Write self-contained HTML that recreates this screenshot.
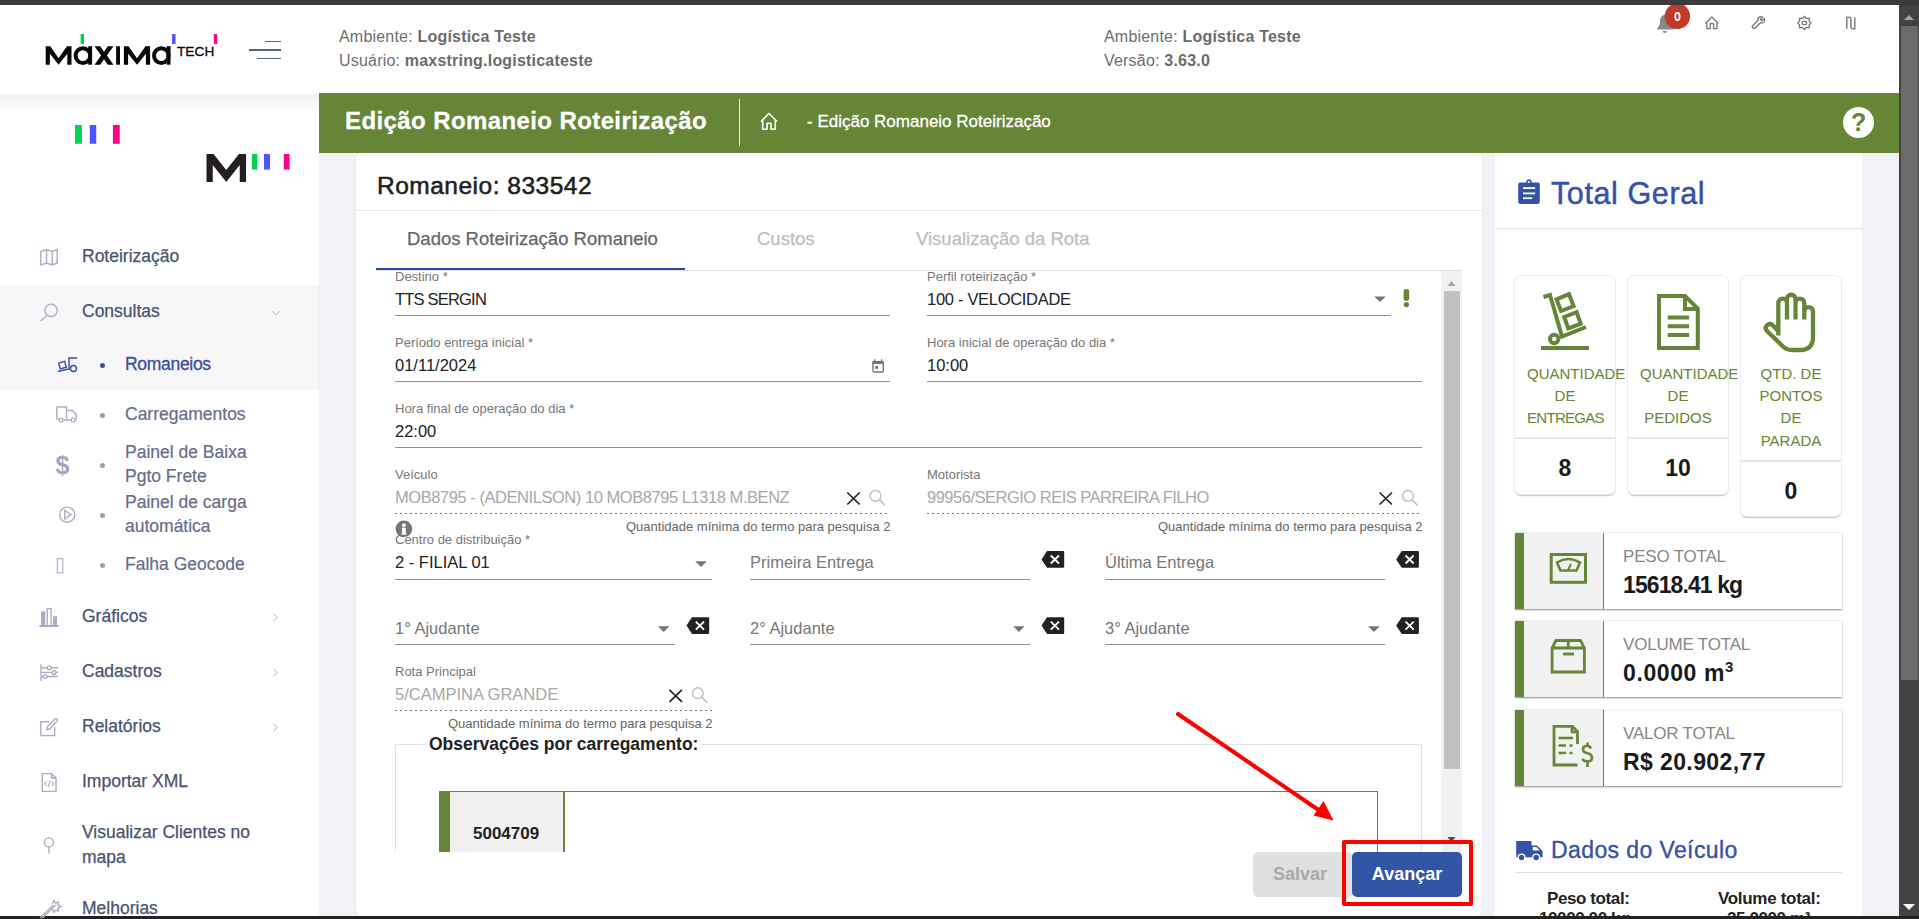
<!DOCTYPE html>
<html><head><meta charset="utf-8">
<style>
*{box-sizing:border-box;margin:0;padding:0}
html,body{width:1919px;height:919px;overflow:hidden;background:#f1f2f7;font-family:"Liberation Sans",sans-serif;position:relative}
.a{position:absolute;white-space:nowrap}
#topbar{left:0;top:0;width:1919px;height:5px;background:#3b3b3b}
#botbar{left:0;top:916px;width:1919px;height:3px;background:#222}
#header{left:0;top:5px;width:1899px;height:88px;background:#fff}
#side{left:0;top:93px;width:319px;height:823px;background:#fff}
#green{left:319px;top:93px;width:1580px;height:60px;background:#668536}
#vscroll{left:1899px;top:5px;width:20px;height:911px;background:#424242}
.htxt{font-size:16px;color:#6e6e6e;line-height:24px;letter-spacing:0.2px}
.htxt b{font-weight:bold;color:#6b6b6b}
#card{left:356px;top:153px;width:1126px;height:763px;background:#fff;border-radius:5px 5px 6px 6px;box-shadow:0 0 2px rgba(0,0,0,0.08)}
#rpanel{left:1495px;top:153px;width:367px;height:763px;background:#fff}
.mi{font-size:17.5px;color:#4b5272;line-height:24px;-webkit-text-stroke:0.25px #4b5272}
.sub{color:#676d8c;-webkit-text-stroke:0.2px #676d8c}
.dot{width:5px;height:5px;border-radius:50%;background:#9a9eb2}
.tab{font-size:18.5px;line-height:22px;-webkit-text-stroke:0.25px currentColor}
.lbl{font-size:13px;color:#777;line-height:16px;margin-top:-1px}
.val{font-size:16.5px;color:#222;line-height:22px;margin-top:-2px}
.dis{color:#a8a8a8}
.ph{color:#777}
.ul{height:1px;background:#8f8f8f}
.dul{height:1.3px;background-image:linear-gradient(90deg,#777 45%,transparent 45%);background-size:5px 1.3px}
.hint{font-size:13px;color:#666;text-align:right;line-height:16px}
.btn{height:45px;border-radius:5px;font-size:18px;font-weight:bold;line-height:45px}
.qc{width:100px;background:#fff;border-radius:6px;box-shadow:0 0 0 1px #ececec,0 1.5px 1.5px rgba(0,0,0,0.25)}
.qd{position:absolute;left:0;width:100px;height:1.5px;background:#e6e6e6}
.ql{width:100px;padding:0 12px;text-align:center;font-size:15px;line-height:22.2px;color:#668536;white-space:nowrap}
.qv{width:100px;text-align:center;font-size:23px;font-weight:bold;color:#1a1a1a;line-height:28px}
.ic{width:327px;height:76px;background:#fff;box-shadow:0 1.5px 1.5px rgba(0,0,0,0.3),0 0 0 1px #efefef;border-left:9.5px solid #668536}
.ic::before{content:"";position:absolute;left:0;top:0;width:78.5px;height:76px;background:#f1f1f1;border-right:1px solid #668536}
.il{font-size:17px;color:#878787;line-height:24px;letter-spacing:-0.2px}
.iv{font-size:23px;font-weight:bold;color:#1a1a1a;line-height:30px;letter-spacing:-0.9px}
</style></head><body>
<div class="a" id="header"></div>
<div class="a" id="side"></div>
<div class="a" id="green"></div>
<div class="a" id="card"></div>
<div class="a" id="rpanel"></div>
<div class="a" id="vscroll"></div>
<div class="a" id="botbar"></div>


<!-- logo -->
<svg class="a" style="left:0;top:0" width="300" height="200" viewBox="0 0 300 200">
<g fill="#0a0609">
<polygon points="45.7,64.7 45.7,46.2 50.3,46.2 58.6,58.3 66.9,46.2 71.5,46.2 71.5,64.7 67.3,64.7 67.3,53.7 58.6,64.7 49.9,53.7 49.9,64.7"/>
<polygon points="123.9,64.7 123.9,46.2 128.5,46.2 137,58.3 145.5,46.2 150.1,46.2 150.1,64.7 145.9,64.7 145.9,53.7 137,64.7 128.1,53.7 128.1,64.7"/>
<polygon points="94.5,46.2 100.2,46.2 104,51.8 107.8,46.2 113.5,46.2 106.9,55.5 113.5,64.7 107.8,64.7 104,59.2 100.2,64.7 94.5,64.7 101.1,55.5"/>
<rect x="116.1" y="46.2" width="3.9" height="18.5"/>
<rect x="88.2" y="46.2" width="3.9" height="18.5"/>
<rect x="166.6" y="46.2" width="3.9" height="18.5"/>
</g>
<g fill="none" stroke="#0a0609" stroke-width="4">
<ellipse cx="82.9" cy="55.6" rx="7.3" ry="7.4"/>
<ellipse cx="161.3" cy="55.6" rx="7.3" ry="7.4"/>
</g>
<rect x="80.6" y="34" width="3.4" height="10" fill="#00d455"/>
<rect x="172.1" y="34" width="3.4" height="10" fill="#4d55ff"/>
<rect x="213.8" y="34" width="3.4" height="10" fill="#ff0090"/>
<text x="177" y="56.3" font-family="Liberation Sans" font-size="13.7" fill="#0a0609" stroke="#0a0609" stroke-width="0.3">TECH</text>
<rect x="75" y="125" width="6.9" height="18.75" fill="#00d455"/>
<rect x="89.75" y="125" width="6.5" height="18.75" fill="#4d55ff"/>
<rect x="112.9" y="125" width="6.85" height="18.75" fill="#ff0090"/>
<polygon fill="#231f20" points="206.5,181.9 206.5,154 213.5,154 226.25,170 239,154 246,154 246,181.9 239.75,181.9 239.75,165 226.25,181.9 212.75,165 212.75,181.9"/>
<rect x="251.9" y="154" width="5.35" height="15.6" fill="#00d455"/>
<rect x="264" y="154" width="6" height="15.6" fill="#4d55ff"/>
<rect x="283.75" y="154" width="5.85" height="15.6" fill="#ff0090"/>
</svg>
<!-- hamburger -->
<div class="a" style="left:265px;top:40.5px;width:16px;height:1.2px;background:#4f6888"></div>
<div class="a" style="left:249px;top:49.2px;width:32px;height:1.8px;background:#4f6888"></div>
<div class="a" style="left:257px;top:57.7px;width:24px;height:1.2px;background:#4f6888"></div>

<!-- sidebar -->
<div class="a" style="left:0;top:94px;width:319px;height:22px;background:linear-gradient(#f1f1f1,#fff)"></div>
<div class="a" style="left:0;top:285px;width:319px;height:105px;background:#f7f7fa"></div>


<!-- menu -->
<div class="a mi" style="left:82px;top:244px">Roteirização</div>
<div class="a mi" style="left:82px;top:299px">Consultas</div>
<div class="a mi" style="left:125px;top:352px;color:#3a4e9e;-webkit-text-stroke:0.3px #3a4e9e;letter-spacing:-0.3px">Romaneios</div>
<div class="a mi sub" style="left:125px;top:402px">Carregamentos</div>
<div class="a mi sub" style="left:125px;top:440px;line-height:24px;white-space:normal;width:150px">Painel de Baixa Pgto Frete</div>
<div class="a mi sub" style="left:125px;top:490px;line-height:24px;white-space:normal;width:150px">Painel de carga automática</div>
<div class="a mi sub" style="left:125px;top:552px">Falha Geocode</div>
<div class="a mi" style="left:82px;top:604px">Gráficos</div>
<div class="a mi" style="left:82px;top:659px">Cadastros</div>
<div class="a mi" style="left:82px;top:714px">Relatórios</div>
<div class="a mi" style="left:82px;top:769px">Importar XML</div>
<div class="a mi" style="left:82px;top:820px;line-height:25px">Visualizar Clientes no<br>mapa</div>
<div class="a mi" style="left:82px;top:896px">Melhorias</div>
<div class="a dot" style="left:100px;top:363px;background:#3a4e9e"></div>
<div class="a dot" style="left:100px;top:413px"></div>
<div class="a dot" style="left:100px;top:463px"></div>
<div class="a dot" style="left:100px;top:513px"></div>
<div class="a dot" style="left:100px;top:563px"></div>


<!-- sidebar icons -->
<svg class="a" style="left:0;top:0" width="320" height="919" viewBox="0 0 320 919">
<g fill="none" stroke="#a9aec4" stroke-width="1.4">
<path d="M40.8,251.5 L46.5,249.5 L52.2,251.5 L57.2,249.5 L57.2,263 L52.2,265 L46.5,263 L40.8,265 Z M46.5,249.5 V263 M52.2,251.5 V265"/>
<circle cx="51.1" cy="310.3" r="6.2"/>
<path d="M46.8,315.5 L40.5,321"/>
<path d="M56.8,419 V407 H66.5 V419 M66.5,410.5 H72.5 L76.3,414.5 V419.5 M63.5,420 H70.5 M56.8,419.5 H58.5 M75.5,420 H76.3"/>
<circle cx="61" cy="420" r="1.9"/><circle cx="73" cy="420" r="1.9"/>
<circle cx="67.2" cy="514.7" r="7.6"/>
<path d="M64.8,510.3 L71,514.7 L64.8,519 Z"/>
<rect x="57.4" y="558.6" width="5.4" height="14.2" stroke-width="1.1"/>
<path d="M47.2,625 V608.6 H51.1 V625"/>
<path d="M41,664.2 V681 M41,667.8 H58 M41,672.4 H58 M41,676.5 H58" />
<circle cx="49.2" cy="667.8" r="1.9" fill="#fff"/><circle cx="54" cy="672.4" r="1.9" fill="#fff"/><circle cx="45.2" cy="676.5" r="1.9" fill="#fff"/>
<path d="M49,721.8 H40.8 V735.6 H54.6 V727"/>
<path d="M46.7,729.6 L47.5,726.5 L55,719 Q56.5,718.3 57.2,719.5 Q57.5,720.5 56.7,721.5 L49.5,729 Z"/>
<path d="M42.3,773.6 H51.5 L56,778 V791.4 H42.3 Z M51.5,773.6 V778 H56"/>
<path d="M46.5,781.5 L44.6,783.8 L46.5,786 M52,781.5 L53.8,783.8 L52,786 M50.3,780.5 L48.2,787" stroke-width="1.1"/>
<circle cx="48.9" cy="842.4" r="4.5"/>
<path d="M48.9,847 V853.7"/>
<path d="M40,918 L53,905 M42.5,918 L55.5,905"/>
<path d="M52.5,904 l1.5,-3.5 l1.5,2.5 l3,-1 l-0.5,3 l3,1.5 l-3,1.5 l0.5,3 l-3,-1 l-1.5,2.5 l-1.5,-3.5"/>
<path d="M272.3,311 L276.3,315 L280.3,311" stroke-width="1"/>
<path d="M273.5,614 L277.5,617.5 L273.5,621" stroke-width="1"/>
<path d="M273.5,669 L277.5,672.5 L273.5,676" stroke-width="1"/>
<path d="M273.5,724 L277.5,727.5 L273.5,731" stroke-width="1"/>
</g>
<g fill="#a9aec4">
<rect x="39.4" y="625" width="19.1" height="2"/>
<rect x="41" y="611.3" width="4.2" height="14"/>
<rect x="53" y="616.2" width="4" height="9"/>
<text x="55.5" y="473.5" font-family="Liberation Sans" font-weight="bold" font-size="25" fill="#a3a7bd">$</text>
</g>
<g fill="none" stroke="#3a4e9e" stroke-width="1.4">
<path d="M69,368 V358 H77.2"/>
<circle cx="73.5" cy="368.5" r="3"/>
<path d="M58,371.5 L70.5,368.5"/>
<path d="M58.6,363.2 L64.6,361.3 L66.3,367.2 L60.3,369 Z"/>
</g>
</svg>


<!-- header icons -->
<svg class="a" style="left:1640px;top:0" width="240" height="160" viewBox="1640 0 240 160">
<path fill="#888" d="M1657,29.5 Q1657,27.5 1659,26 Q1660,24 1660,20 Q1660.5,15 1666,14.5 Q1671.5,15 1672,20 Q1672,24 1673,26 Q1675,27.5 1675,29.5 Z"/>
<path fill="#888" d="M1662.5,31 H1667 Q1666.5,33 1664.75,33 Q1663,33 1662.5,31 Z"/>
<circle cx="1677.4" cy="16.3" r="12.7" fill="#c0392b"/>
<g fill="none" stroke="#777" stroke-width="1.3" stroke-linejoin="round">
<path d="M1705.5,23.5 L1711.9,17 L1718.3,23.5 M1706.8,22.5 V28.6 H1710.2 V23.6 H1713.6 V28.6 H1717 V22.5"/>
<path d="M1752.5,27.5 Q1751.8,26.6 1752.6,25.7 L1758.3,20 Q1757.6,17.5 1759.8,16.8 Q1761.5,16.3 1762.6,17 L1760.4,19.3 L1761.7,20.7 L1764.1,18.5 Q1765,20 1764.2,21.8 Q1763,23.5 1760.5,22.7 L1754.8,28.3 Q1753.5,28.7 1752.5,27.5 Z"/>
<path d="M1804.4,16.3 L1806.2,18.7 L1809.3,18.2 L1809.2,21.3 L1811.2,23 L1809.2,24.7 L1809.3,27.8 L1806.2,27.3 L1804.4,29.7 L1802.6,27.3 L1799.5,27.8 L1799.6,24.7 L1797.6,23 L1799.6,21.3 L1799.5,18.2 L1802.6,18.7 Z"/>
<rect x="1802.2" y="21.4" width="4.4" height="3.2" rx="1.4"/>
<path d="M1846.8,28.7 V17.3 H1848.8 Q1850.9,17.3 1850.9,19.5 V26.5 Q1850.9,28.7 1853,28.7 H1854.8 V17.3" stroke="#888" stroke-width="1.6"/>
</g>
<text x="1677.6" y="21" text-anchor="middle" font-family="Liberation Sans" font-weight="bold" font-size="12.5" fill="#fff">0</text>
<circle cx="1858.5" cy="122.5" r="15.5" fill="#fff"/>
<text x="1858.7" y="130.5" text-anchor="middle" font-family="Liberation Sans" font-weight="bold" font-size="25" fill="#668536">?</text>
</svg>
<svg class="a" style="left:750px;top:100px" width="40" height="40" viewBox="750 100 40 40">
<g fill="none" stroke="#fff" stroke-width="1.6" stroke-linejoin="round">
<path d="M761,121.5 L769,113.5 L777,121.5 M762.7,120 V129.3 H767 V123.2 H771 V129.3 H775.3 V120"/>
</g>
</svg>


<!-- card content -->
<div class="a" style="left:356px;top:210px;width:1126px;height:1px;background:#e6e6e6"></div>
<div class="a tab" style="left:407px;top:228px;color:#666">Dados Roteirização Romaneio</div>
<div class="a tab" style="left:757px;top:228px;color:#bdbdbd">Custos</div>
<div class="a tab" style="left:916px;top:228px;color:#bdbdbd">Visualização da Rota</div>
<div class="a" style="left:376px;top:270px;width:1086px;height:1px;background:#e0e0e0"></div>
<div class="a" style="left:376px;top:268px;width:309px;height:2px;background:#2846a0"></div>

<!-- form -->
<div class="a lbl" style="left:395px;top:270px">Destino *</div>
<div class="a val" style="left:395px;top:290px;letter-spacing:-0.8px">TTS SERGIN</div>
<div class="a ul" style="left:395px;top:315px;width:495px"></div>
<div class="a lbl" style="left:927px;top:270px">Perfil roteirização *</div>
<div class="a val" style="left:927px;top:290px;letter-spacing:-0.3px">100 - VELOCIDADE</div>
<div class="a ul" style="left:927px;top:315px;width:464px"></div>

<div class="a lbl" style="left:395px;top:336px">Período entrega inicial *</div>
<div class="a val" style="left:395px;top:356px">01/11/2024</div>
<div class="a ul" style="left:395px;top:381px;width:495px"></div>
<div class="a lbl" style="left:927px;top:336px">Hora inicial de operação do dia *</div>
<div class="a val" style="left:927px;top:356px">10:00</div>
<div class="a ul" style="left:927px;top:381px;width:495px"></div>

<div class="a lbl" style="left:395px;top:402px">Hora final de operação do dia *</div>
<div class="a val" style="left:395px;top:422px">22:00</div>
<div class="a ul" style="left:395px;top:447px;width:1027px"></div>

<div class="a lbl" style="left:395px;top:468px">Veículo</div>
<div class="a val dis" style="left:395px;top:488px;letter-spacing:-0.45px">MOB8795 - (ADENILSON) 10 MOB8795 L1318 M.BENZ</div>
<div class="a dul" style="left:395px;top:513px;width:492px"></div>
<div class="a hint" style="left:626px;top:519px;width:264px">Quantidade mínima do termo para pesquisa 2</div>
<div class="a lbl" style="left:927px;top:468px">Motorista</div>
<div class="a val dis" style="left:927px;top:488px;letter-spacing:-0.5px">99956/SERGIO REIS PARREIRA FILHO</div>
<div class="a dul" style="left:927px;top:513px;width:493px"></div>
<div class="a hint" style="left:1158px;top:519px;width:264px">Quantidade mínima do termo para pesquisa 2</div>

<div class="a lbl" style="left:395px;top:533px">Centro de distribuição *</div>
<div class="a val" style="left:395px;top:553px">2 - FILIAL 01</div>
<div class="a ul" style="left:395px;top:579px;width:317px"></div>
<div class="a val ph" style="left:750px;top:553px">Primeira Entrega</div>
<div class="a ul" style="left:750px;top:579px;width:280px"></div>
<div class="a val ph" style="left:1105px;top:553px">Última Entrega</div>
<div class="a ul" style="left:1105px;top:579px;width:280px"></div>

<div class="a val ph" style="left:395px;top:619px">1° Ajudante</div>
<div class="a ul" style="left:395px;top:644px;width:280px"></div>
<div class="a val ph" style="left:750px;top:619px">2° Ajudante</div>
<div class="a ul" style="left:750px;top:644px;width:280px"></div>
<div class="a val ph" style="left:1105px;top:619px">3° Ajudante</div>
<div class="a ul" style="left:1105px;top:644px;width:280px"></div>

<div class="a lbl" style="left:395px;top:665px">Rota Principal</div>
<div class="a val dis" style="left:395px;top:685px">5/CAMPINA GRANDE</div>
<div class="a dul" style="left:395px;top:710px;width:317px"></div>
<div class="a hint" style="left:448px;top:716px;width:264px">Quantidade mínima do termo para pesquisa 2</div>

<!-- form icons -->
<svg class="a" style="left:356px;top:270px" width="1100" height="460" viewBox="356 270 1100 460">
<path d="M1374.2,296.5 H1385.8 L1380,302.1 Z" fill="#757575"/>
<path d="M695.2,561.3 H706.8 L701,566.9 Z" fill="#757575"/>
<path d="M657.9000000000001,626.3 H669.5 L663.7,631.9 Z" fill="#757575"/>
<path d="M1013.1,626.3 H1024.7 L1018.9,631.9 Z" fill="#757575"/>
<path d="M1368.1000000000001,626.3 H1379.7 L1373.9,631.9 Z" fill="#757575"/>
<path d="M847.3,492.5 L859.7,504.5 M859.7,492.5 L847.3,504.5" stroke="#222" stroke-width="1.7" fill="none"/>
<circle cx="875.5" cy="495.9" r="5.4" stroke="#bdbdbd" stroke-width="1.4" fill="none"/><path d="M879.4,499.79999999999995 L885.0,505.4" stroke="#bdbdbd" stroke-width="1.6"/>
<path d="M1379.6,492.5 L1392.0,504.5 M1392.0,492.5 L1379.6,504.5" stroke="#222" stroke-width="1.7" fill="none"/>
<circle cx="1408" cy="495.9" r="5.4" stroke="#bdbdbd" stroke-width="1.4" fill="none"/><path d="M1411.9,499.79999999999995 L1417.5,505.4" stroke="#bdbdbd" stroke-width="1.6"/>
<path d="M669.5,689.8 L681.9000000000001,701.8 M681.9000000000001,689.8 L669.5,701.8" stroke="#222" stroke-width="1.7" fill="none"/>
<circle cx="697.8" cy="693.2" r="5.4" stroke="#bdbdbd" stroke-width="1.4" fill="none"/><path d="M701.6999999999999,697.1 L707.3,702.7" stroke="#bdbdbd" stroke-width="1.6"/>
<path d="M1041.5,559.4 L1047.0,551 H1063.0 Q1064.2,551 1064.2,552.2 V566.5 Q1064.2,567.7 1063.0,567.7 H1047.0 Z" fill="#222"/><path d="M1050.8,555.5 L1059.0,563.5 M1059.0,555.5 L1050.8,563.5" stroke="#fff" stroke-width="1.8"/>
<path d="M1396.2,559.4 L1401.7,551 H1417.7 Q1418.9,551 1418.9,552.2 V566.5 Q1418.9,567.7 1417.7,567.7 H1401.7 Z" fill="#222"/><path d="M1405.5,555.5 L1413.7,563.5 M1413.7,555.5 L1405.5,563.5" stroke="#fff" stroke-width="1.8"/>
<path d="M686.5,625.6 L692.0,617.2 H708.0 Q709.2,617.2 709.2,618.4000000000001 V632.7 Q709.2,633.9000000000001 708.0,633.9000000000001 H692.0 Z" fill="#222"/><path d="M695.8,621.7 L704.0,629.7 M704.0,621.7 L695.8,629.7" stroke="#fff" stroke-width="1.8"/>
<path d="M1041.5,625.6 L1047.0,617.2 H1063.0 Q1064.2,617.2 1064.2,618.4000000000001 V632.7 Q1064.2,633.9000000000001 1063.0,633.9000000000001 H1047.0 Z" fill="#222"/><path d="M1050.8,621.7 L1059.0,629.7 M1059.0,621.7 L1050.8,629.7" stroke="#fff" stroke-width="1.8"/>
<path d="M1396.2,625.6 L1401.7,617.2 H1417.7 Q1418.9,617.2 1418.9,618.4000000000001 V632.7 Q1418.9,633.9000000000001 1417.7,633.9000000000001 H1401.7 Z" fill="#222"/><path d="M1405.5,621.7 L1413.7,629.7 M1413.7,621.7 L1405.5,629.7" stroke="#fff" stroke-width="1.8"/>
<circle cx="403.9" cy="528.8" r="8.3" fill="#757575"/><circle cx="403.9" cy="525.2" r="1.9" fill="#fff"/><path d="M402.2,528 H405.3 V533.8 H406.2 V534.3 H401.7 V533.8 H402.5 V529 H402.2 Z" fill="#fff" stroke="#fff" stroke-width="0.8"/>
<rect x="873" y="361.7" width="10.3" height="10.3" rx="1.2" fill="none" stroke="#757575" stroke-width="1.4"/><rect x="872.5" y="361" width="11.3" height="3" fill="#757575"/><path d="M874.8,359.3 V362 M881.6,359.3 V362" stroke="#757575" stroke-width="1.3"/><rect x="875.2" y="366" width="2.8" height="2.8" fill="#757575"/>
<rect x="1403.6" y="289" width="5.6" height="12" rx="2.4" fill="#668536"/><circle cx="1406.4" cy="304.6" r="2.6" fill="#668536"/>
</svg>
<!-- observacoes -->
<div class="a" style="left:395px;top:744px;width:1027px;height:110px;border:1px solid #dfe2ea;border-bottom:none"></div>
<div class="a" style="left:427px;top:734px;padding:0 2px;background:#fff;font-size:17.5px;font-weight:bold;color:#222">Observações por carregamento:</div>
<div class="a" style="left:439px;top:791px;width:939px;height:61px;border-top:1px solid #668536;border-right:1px solid #668536"></div>
<div class="a" style="left:439px;top:791px;width:11px;height:61px;background:#668536"></div>
<div class="a" style="left:450px;top:792px;width:115px;height:60px;background:#f0f0f0;border-right:2px solid #668536"></div>
<div class="a" style="left:473px;top:824px;font-size:17px;font-weight:bold;color:#222">5004709</div>
<div class="a" style="left:376px;top:852px;width:1086px;height:64px;background:#fff"></div>

<!-- inner scrollbar -->
<div class="a" style="left:1441px;top:271px;width:21px;height:581px;background:#f1f1f1"></div>
<div class="a" style="left:1443.5px;top:291px;width:16px;height:478px;background:#c1c1c1"></div>
<svg class="a" style="left:1442px;top:271px" width="20" height="581"><path d="M5.5,15 L9.5,10 L13.5,15 Z" fill="#a3a3a3"/><path d="M5.5,566 L9.5,571 L13.5,566 Z" fill="#505050"/></svg>

<!-- buttons -->
<div class="a btn" style="left:1253px;top:852px;width:100px;background:#e0e0e0;color:#a9a9a9;padding-left:20px">Salvar</div>
<div class="a btn" style="left:1352px;top:852px;width:110px;background:#3355a6;color:#fff;text-align:center">Avançar</div>
<div class="a" style="left:1342px;top:840px;width:131px;height:66px;border:4px solid #ff0000;border-radius:2px"></div>
<svg class="a" style="left:1170px;top:705px" width="175" height="125" viewBox="1170 705 175 125">
<path d="M1178,714 L1320,811" stroke="#ff0000" stroke-width="4" stroke-linecap="round"/>
<path d="M1333.5,820.5 L1313.5,815.5 L1323.5,801 Z" fill="#ff0000"/>
</svg>


<!-- right panel -->
<div class="a" style="left:1495px;top:228px;width:367px;height:1px;background:#e3e3e3"></div>
<div class="a" style="left:1551px;top:176px;font-size:30.5px;color:#3553a6;line-height:34px;letter-spacing:0.6px;-webkit-text-stroke:0.5px #3553a6">Total Geral</div>
<svg class="a" style="left:1510px;top:170px" width="40" height="40" viewBox="1510 170 40 40">
<rect x="1518.2" y="182.6" width="21.6" height="21.3" rx="1.8" fill="#3553a6"/>
<circle cx="1529" cy="181.8" r="2.6" fill="#3553a6"/><circle cx="1529" cy="182" r="1.1" fill="#fff"/>
<rect x="1523" y="187.2" width="12.2" height="1.8" fill="#fff"/>
<rect x="1523" y="192.5" width="12.2" height="1.8" fill="#fff"/>
<rect x="1523" y="197.3" width="9.2" height="1.8" fill="#fff"/>
</svg>
<div class="a qc" style="left:1515px;top:276px;height:218px"><div class="qd" style="top:161px"></div></div>
<div class="a qc" style="left:1628px;top:276px;height:218px"><div class="qd" style="top:161px"></div></div>
<div class="a qc" style="left:1741px;top:276px;height:240px"><div class="qd" style="top:184px"></div></div>
<div class="a ql" style="left:1515px;top:363px">QUANTIDADE<br>DE<br><span style="letter-spacing:-0.7px">ENTREGAS</span></div>
<div class="a ql" style="left:1628px;top:363px">QUANTIDADE<br>DE<br>PEDIDOS</div>
<div class="a ql" style="left:1741px;top:363px">QTD. DE<br>PONTOS<br>DE<br>PARADA</div>
<div class="a qv" style="left:1515px;top:454px">8</div>
<div class="a qv" style="left:1628px;top:454px">10</div>
<div class="a qv" style="left:1741px;top:477px">0</div>
<svg class="a" style="left:1530px;top:285px" width="300" height="75" viewBox="1530 285 300 75">
<g fill="none" stroke="#668536" stroke-width="4">
<path d="M1541,348 H1589"/>
<circle cx="1554.2" cy="339" r="4.2"/>
<path d="M1543.5,297 L1550,295 L1562,336.5 L1586,327"/>
<path d="M1556.5,299.3 L1569,294.2 L1573.6,306 L1561,311 Z"/>
<path d="M1564.2,317 L1576.6,312.2 L1580.7,323.8 L1568.2,328.4 Z"/>
<path d="M1659,296 H1685 L1697.8,308.5 V348 H1659 Z"/>
<path d="M1685,296 V309 H1697.8"/>
<path d="M1667.7,317.6 H1689.1 M1667.7,326.2 H1689.1 M1667.7,335 H1689.1"/>
<path stroke-width="4.3" stroke-linejoin="round" d="M1778.3,335.5 V303 A4.35,4.35 0 0 1 1787,303 V319.5 M1787,304 V299 A4.25,4.25 0 0 1 1795.5,299 V319.5 M1795.5,303 A4.4,4.4 0 0 1 1804.3,303 V319.5 M1804.3,311.5 A4.35,4.35 0 0 1 1813,311.5 V337 Q1813,350 1800,350 H1792 Q1786.5,350 1782.5,346 L1767,331 Q1764.3,328 1767,325.3 Q1770,322.6 1773,325.5 L1779,332"/>
</g>
</svg>

<div class="a ic" style="left:1515px;top:533px"></div>
<div class="a ic" style="left:1515px;top:621px"></div>
<div class="a ic" style="left:1515px;top:710px"></div>
<div class="a il" style="left:1623px;top:545px">PESO TOTAL</div>
<div class="a iv" style="left:1623px;top:570px">15618.41 kg</div>
<div class="a il" style="left:1623px;top:633px">VOLUME TOTAL</div>
<div class="a iv" style="left:1623px;top:658px;letter-spacing:0.6px">0.0000 m<span style="font-size:15px;position:relative;top:-9px;font-weight:bold;letter-spacing:0">3</span></div>
<div class="a il" style="left:1623px;top:722px">VALOR TOTAL</div>
<div class="a iv" style="left:1623px;top:747px;letter-spacing:0.4px">R$ 20.902,77</div>
<svg class="a" style="left:1540px;top:540px" width="60" height="240" viewBox="1540 540 60 240">
<g fill="none" stroke="#668536" stroke-width="3">
<rect x="1551.2" y="554.5" width="34.3" height="27.8"/>
<path d="M1557,562.5 Q1568.5,555.5 1580,562.5 L1576.5,570.5 H1560.5 Z" stroke-width="2.6"/>
<path d="M1568,570 L1571,564" stroke-width="2"/>
<path d="M1552.1,648 L1556,640.5 H1580.5 L1584.4,648 V672 H1552.1 Z M1552.1,648 H1584.4 M1568.3,640.5 V648" stroke-width="2.8"/>
<path d="M1563,654 H1574" stroke-width="2.8"/>
<path d="M1577.5,744 V731.5 L1572.5,726.4 H1554 V765 H1577.5" stroke-width="2.8"/>
<path d="M1572,726.4 V732 H1577.5" stroke-width="2.5"/>
<path d="M1558.5,738 H1573 M1558.5,745.5 H1566 M1569.5,745.5 H1572.5 M1558.5,753 H1566 M1569.5,753 H1572.5" stroke-width="2.6"/>
<path d="M1591,748.5 Q1590,745.8 1587,745.8 Q1583,746 1583,749.3 Q1583,752.5 1587.5,753.3 Q1592,754.2 1592,758 Q1592,761.4 1587.2,761.4 Q1583.6,761.4 1582.6,758.7 M1587.5,742.6 V745.8 M1587.5,761.4 V767" stroke-width="2.6"/>
</g>
</svg>

<div class="a" style="left:1551px;top:836px;font-size:23px;color:#3553a6;line-height:28px;letter-spacing:0.4px;-webkit-text-stroke:0.35px #3553a6">Dados do Veículo</div>
<svg class="a" style="left:1512px;top:836px" width="36" height="28" viewBox="1512 836 36 28">
<path fill="#3553a6" d="M1516.2,841 H1531.5 V845.5 H1537 L1542.5,851 V857.3 H1516.2 Z"/>
<circle cx="1521.5" cy="857.5" r="3.4" fill="#3553a6" stroke="#fff" stroke-width="1.3"/>
<circle cx="1536.2" cy="857.5" r="3.4" fill="#3553a6" stroke="#fff" stroke-width="1.3"/>
<path fill="#fff" d="M1532.8,847 H1536.3 L1539.8,850.5 H1532.8 Z"/>
</svg>
<div class="a" style="left:1515px;top:872px;width:327px;height:1px;background:#e3e3e3"></div>
<div class="a" style="left:1547px;top:889px;font-size:17px;font-weight:bold;color:#222;letter-spacing:-0.4px">Peso total:</div>
<div class="a" style="left:1718px;top:889px;font-size:17px;font-weight:bold;color:#222;letter-spacing:-0.3px">Volume total:</div>
<div class="a" style="left:1539px;top:909px;font-size:17px;font-weight:bold;color:#222;letter-spacing:-0.4px">10000.00 kg</div>
<div class="a" style="left:1727px;top:909px;font-size:17px;font-weight:bold;color:#222;letter-spacing:-0.4px">25.0000 m³</div>

<!-- header texts -->
<div class="a htxt" style="left:339px;top:25px">Ambiente: <b>Logística Teste</b><br>Usuário: <b>maxstring.logisticateste</b></div>
<div class="a htxt" style="left:1104px;top:25px">Ambiente: <b>Logística Teste</b><br>Versão: <b>3.63.0</b></div>

<!-- green bar -->
<div class="a" style="left:345px;top:107px;font-size:24px;font-weight:bold;color:#fff;letter-spacing:0.4px;-webkit-text-stroke:0.3px #fff">Edição Romaneio Roteirização</div>
<div class="a" style="left:739px;top:99px;width:1px;height:47px;background:#e8eee0"></div>
<div class="a" style="left:807px;top:112px;font-size:17px;color:#fff;-webkit-text-stroke:0.3px #fff">- Edição Romaneio Roteirização</div>

<!-- card -->
<div class="a" style="left:377px;top:172px;font-size:24.5px;color:#1e1e1e;letter-spacing:0.5px;-webkit-text-stroke:0.55px #1e1e1e">Romaneio: 833542</div>
<div class="a" id="topbar"></div>
<!-- page scrollbar -->
<div class="a" style="left:1901px;top:26px;width:17px;height:654px;background:#6b6b6b"></div>
<svg class="a" style="left:1899px;top:5px" width="20" height="911"><path d="M5,15 L10,10 L15,15 Z" fill="#a3a3a3"/><path d="M4,899 L10,905 L16,899 Z" fill="#fff"/></svg>
</body></html>
